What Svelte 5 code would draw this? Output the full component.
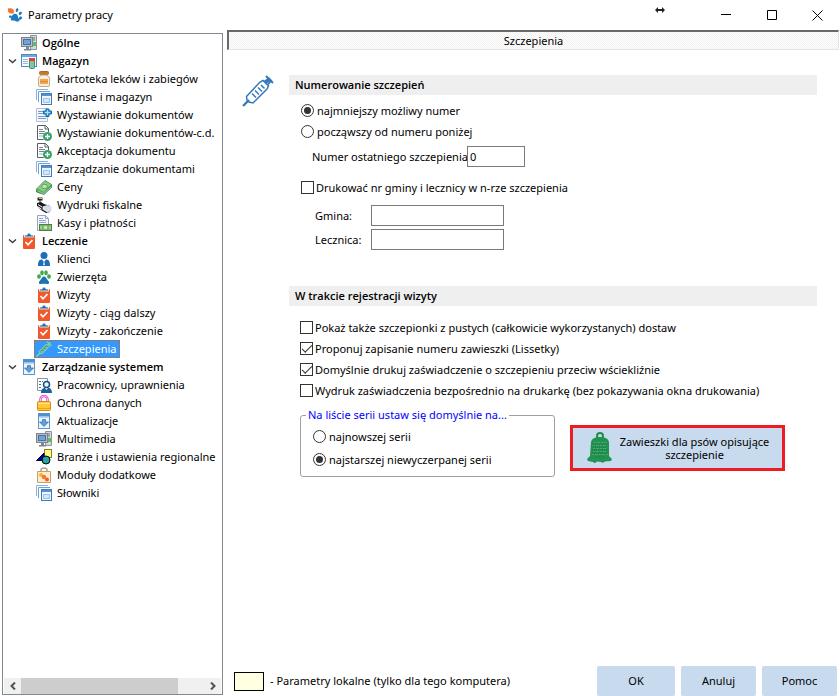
<script>
  const clipboard =
    '<rect x="2" y="2" width="12" height="14" rx="1" fill="#f1582b"/><path d="M3.500 4V2h2.500a2 2 0 0 1 4 0h2.500v2z" fill="#1d73b4" stroke="#fff" stroke-width=".8"/><path d="M4.500 9l2.500 2.800L11.500 7" fill="none" stroke="#fff" stroke-width="1.700"/>';
  const windows =
    '<path d="M.5 11V.5H12" fill="none" stroke="#86b2e0"/><path d="M2.500 13V2.500H14" fill="none" stroke="#6ba1d8"/><rect x="5.500" y="4.500" width="10" height="11" fill="#eef5fc" stroke="#3f7cba"/><path d="M6 6h9" stroke="#5593d0" stroke-width="2"/><path d="M7.500 9.500h6v4h-6z" fill="#d6e7f7" stroke="#9cc2e8"/>';
  const computer =
    '<path d="M9.500.5h6v14h-6z" fill="#d3d9db" stroke="#8b9698"/><path d="M11 3h3M11 5h3" stroke="#66757a"/><rect x="12" y="7" width="3" height="4" fill="#58c25b"/><rect x=".5" y="2.500" width="11" height="9" fill="#b9c1c6" stroke="#7a868c"/><rect x="2.500" y="4.500" width="7" height="5" fill="#6fa3de" stroke="#4a72a0"/><path d="M5 12h3v2h2v1.500H3V14h2z" fill="#7c878c"/>';
  const docPlus =
    '<path d="M1.500.5v14h6M1.500.5h8l3 3V7M9 .5v3.500h3.500" fill="none" stroke="#555e62"/><path d="M3 4.500h4M3 6.500h6M3 8.500h5" stroke="#78828a"/><path d="M3 11h4" stroke="#bcdcf4" stroke-width="2"/><circle cx="11.500" cy="11.500" r="4.500" fill="#38a169"/><path d="M9 11.500h5M11.500 9v5" stroke="#fff" stroke-width="1.300"/>';
  const update =
    '<rect x="2.500" y=".5" width="11" height="15" fill="#edf5fc" stroke="#6295c5"/><path d="M2 2h12" stroke="#4c91d0" stroke-width="3"/><path d="M3 4.500h10" stroke="#b8d4ee"/><path d="M6.500 6.500h3v2.500h3L8 13.500 3.500 9h3z" fill="#5da2dd" stroke="#2f6dab" stroke-width=".7"/>';

  const icons = {
    clipboard,
    windows,
    computer,
    docPlus,
    update,
    store:
      '<rect x=".5" y="1.500" width="15" height="12" fill="#f5faff" stroke="#5089bd"/><path d="M1 3h14" stroke="#6fa8dc" stroke-width="2"/><path d="M2 6.500h5M2 8.500h5M2 10.500h5" stroke="#91bbe1"/><rect x="8.500" y="6.500" width="5" height="9" rx="1" fill="#7cc9a0" stroke="#4b896c"/><rect x="8" y="5" width="6" height="3" fill="#e33e36"/>',
    jar:
      '<rect x="3.500" y=".5" width="9" height="3" rx="1" fill="#c47a2a" stroke="#a8682a"/><path d="M4.500 4h7c0 1.500 2 1.500 2 4v6q0 1.500-1.500 1.500H4Q2.500 15.500 2.500 14V8c0-2.500 2-2.500 2-4z" fill="#f7eee0" stroke="#c7a77c"/><path d="M4 8h8v5H4z" fill="#f0a552"/><path d="M4 10.500h8" stroke="#e08a2e"/>',
    issue:
      '<path d="M.5 1.500h11v13H.5z" fill="#f3f7fe" stroke="#b0c0dd"/><path d="M2 4.500h5M2 6.500h5M2 9.500h8M2 11.500h8" stroke="#7f95cf"/><path d="M10 2h3v2h2.500v3H13v2.500h-3V7H7.500V4H10z" fill="#42a4dd" stroke="#1669a2"/><path d="M11.500 3v5M9 5.500h5" stroke="#a7e0fa"/>',
    cash:
      '<path d="M.5 10L9 1.500l6.500 4v3L8 15.500.5 13z" fill="#4a9f4e" stroke="#327c37" stroke-width=".7"/><path d="M1 9.500L9 2l6 3.500-7 7.500z" fill="#8acb85"/><ellipse cx="8.500" cy="7.500" rx="2.800" ry="2.200" fill="#bde5b7" stroke="#439348" stroke-width=".8"/><path d="M1.500 11.500l6.500 3 7-6.500" fill="none" stroke="#c4eabd" stroke-width=".7"/>',
    printer:
      '<path d="M1.500.5h5v3h-5z" fill="#222"/><path d="M3 1.500h3" stroke="#d2c96b"/><path d="M4 3v3" stroke="#222"/><path d="M1 6l4-1 3 2 6 2v6l-4 1-5-3-4-4z" fill="#171717"/><path d="M6.500 9.500l5-1.500 4 2v4l-4 1.500-5-3z" fill="#d7deed"/><path d="M2 7.500l4 2.500M1.500 9.500l4 2.500" stroke="#fff"/>',
    payments:
      '<path d="M1.500.5h8l3 3v12h-11z" fill="#f4f6fa" stroke="#98a6bf"/><path d="M9.500.5v3h3M3 3.500h4M3 5.500h7M3 7.500h7" fill="none" stroke="#8fa8dc"/><rect x="3.500" y="9.500" width="12" height="6" fill="#7eb26d" stroke="#4c8440"/><circle cx="9.500" cy="12.500" r="1.800" fill="#c7e4b8"/><path d="M5 11v3M14 11v3" stroke="#c7e4b8"/>',
    person:
      '<circle cx="8" cy="4.500" r="3.500" fill="#1c70b3"/><path d="M2 15c0-4.500 1-6.500 4-6.500l2 2.500 2-2.500c3 0 4 2 4 6.500z" fill="#1c70b3"/><path d="M8 9.500l.8 4-.8 1-.8-1z" fill="#fff"/>',
    paw:
      '<ellipse cx="3" cy="7.500" rx="1.900" ry="2.300" fill="#42a949"/><ellipse cx="6" cy="3.700" rx="1.800" ry="2.500" fill="#42a949"/><ellipse cx="10" cy="3.700" rx="1.800" ry="2.500" fill="#42a949"/><ellipse cx="13" cy="7.500" rx="1.900" ry="2.300" fill="#42a949"/><path d="M8 7.500c2 0 2 2 4 4s1 4-1 3.500-4-.5-6 0-3-1.500-1-3.500 2-4 4-4z" fill="#1b72b1"/>',
    syringe:
      '<path d="M0 16l4.500-4.500M12 4l2.500-2.500M11 .5l4.500 4.500" stroke="#7fd0a4" stroke-width="1.500"/><path d="M3 10.500L10.500 3l2.500 2.500L5.500 13z" fill="#4fa67c" stroke="#b5e3c9" stroke-width=".8"/><path d="M5.500 10l1.500 1.500M7.500 8L9 9.500M9.500 6L11 7.500" stroke="#c5ecd6" stroke-width=".8"/>',
    staff:
      '<path d="M8 13.500H1.500v-12h10V4" fill="none" stroke="#8c979e"/><path d="M3 4.500h4M3 7.500h3M3 10.500h2" stroke="#606a70" stroke-dasharray="2 1"/><circle cx="10.500" cy="7.500" r="3" fill="#eaf4fc" stroke="#164d82" stroke-width="1.500"/><path d="M5 16c0-4 2-5 4-5l1.500 2 1.500-2c3 0 4 2 4 5z" fill="#1d609d"/>',
    lock:
      '<path d="M4.500 7V4a3.500 3 0 0 1 7 0v3" fill="none" stroke="#e33ad1" stroke-width="2.400"/><path d="M4.500 7V4a3.500 3 0 0 1 7 0v3" fill="none" stroke="#f8c6f0"/><rect x="1.500" y="6.500" width="13" height="9" rx="1" fill="#ffc938" stroke="#d78918"/><path d="M2 8.500h12" stroke="#ffe58a"/><path d="M2 13.500h12" stroke="#f3a11d"/>',
    shapes:
      '<rect x="8.500" y=".5" width="7" height="8" fill="#fff68a" stroke="#8a831c"/><path d="M.5 11.500L8 4v7.500z" fill="#0000c8" stroke="#000"/><circle cx="10" cy="11" r="4" fill="#20a8a0" stroke="#000"/>',
    modules:
      '<path d="M5 6V3q0-2 3-2t3 2v3" fill="none" stroke="#a5a397" stroke-width="1.500"/><path d="M1.500 4.500h13v11h-13z" fill="#ffeccc" stroke="#c69d62"/><circle cx="5" cy="8" r="2" fill="#f8b029"/><circle cx="8" cy="10" r="2.200" fill="#f57a24"/><circle cx="11" cy="12.500" r="2" fill="#ef5c35"/>'
  };

  const tree = [
    { label: 'Ogólne', icon: 'computer', items: [] },
    {
      label: 'Magazyn',
      icon: 'store',
      items: [
        ['Kartoteka leków i zabiegów', 'jar'],
        ['Finanse i magazyn', 'windows'],
        ['Wystawianie dokumentów', 'issue'],
        ['Wystawianie dokumentów-c.d.', 'docPlus'],
        ['Akceptacja dokumentu', 'docPlus'],
        ['Zarządzanie dokumentami', 'windows'],
        ['Ceny', 'cash'],
        ['Wydruki fiskalne', 'printer'],
        ['Kasy i płatności', 'payments']
      ]
    },
    {
      label: 'Leczenie',
      icon: 'clipboard',
      items: [
        ['Klienci', 'person'],
        ['Zwierzęta', 'paw'],
        ['Wizyty', 'clipboard'],
        ['Wizyty - ciąg dalszy', 'clipboard'],
        ['Wizyty - zakończenie', 'clipboard'],
        ['Szczepienia', 'syringe']
      ]
    },
    {
      label: 'Zarządzanie systemem',
      icon: 'update',
      items: [
        ['Pracownicy, uprawnienia', 'staff'],
        ['Ochrona danych', 'lock'],
        ['Aktualizacje', 'update'],
        ['Multimedia', 'computer'],
        ['Branże i ustawienia regionalne', 'shapes'],
        ['Moduły dodatkowe', 'modules'],
        ['Słowniki', 'windows']
      ]
    }
  ];

  let selected = $state('Szczepienia');
  let numbering = $state('lowest');
  let series = $state('oldest');
  let lastNumber = $state('0');
  let printCodes = $state(false);
  let commune = $state('');
  let clinic = $state('');
  let visit = $state([
    { label: 'Pokaż także szczepionki z pustych (całkowicie wykorzystanych) dostaw', on: false },
    { label: 'Proponuj zapisanie numeru zawieszki (Lissetky)', on: true },
    { label: 'Domyślnie drukuj zaświadczenie o szczepieniu przeciw wściekliźnie', on: true },
    { label: 'Wydruk zaświadczenia bezpośrednio na drukarkę (bez pokazywania okna drukowania)', on: false }
  ]);
</script>

{#snippet icon(name)}
  <svg class="icon" viewBox="0 0 16 16" aria-hidden="true">{@html icons[name]}</svg>
{/snippet}

<div class="window">
  <header class="titlebar">
    <svg class="logo" viewBox="0 0 16 16" aria-hidden="true">
      <path d="M1 1.500c3-1 6 0 6 3s-2 2-3 2-4-1-3-5z" fill="#f07a2a" />
      <path d="M9 2c2-2 3 0 2 2s-3 1-2-2zM12.500 5c3-1 3 1 1.500 2.500s-3.500 0-1.500-2.500zM13 9.500c3 0 2.500 2 1 3s-3-1.500-1-3zM2 9c2-1 3 0 3 1s-3 2-3-1z" fill="#1e7bc0" />
      <path d="M7 7c2-1 4 1 4 3s3 2 1 4-3-.5-5-.5-4 .5-3-2 1-3.500 3-4.500z" fill="#1e7bc0" />
    </svg>
    <h1>Parametry pracy</h1>
    <svg class="resize" viewBox="0 0 10 6" aria-hidden="true">
      <path d="M0 3l3-3v2h4V0l3 3-3 3V4H3v2z" fill="#222" />
    </svg>
    <button class="caption" aria-label="Minimalizuj"><svg viewBox="0 0 11 11"><path d="M0 4.500h10" /></svg></button>
    <button class="caption" aria-label="Maksymalizuj"><svg viewBox="0 0 11 11"><path d="M.5.5h9v9h-9z" /></svg></button>
    <button class="caption" aria-label="Zamknij"><svg viewBox="0 0 11 11"><path d="M.5.5l10 10M10.500.5l-10 10" /></svg></button>
  </header>

  <div class="body">
    <nav class="sidebar" aria-label="Parametry">
      <ul class="tree">
        {#each tree as group}
          <li>
            <button class="node group">
              <span class="twist">
                {#if group.items.length}
                  <svg viewBox="0 0 9 5" aria-hidden="true"><path d="M1 .5l3.500 3 3.500-3" /></svg>
                {/if}
              </span>
              {@render icon(group.icon)}
              <span class="label">{group.label}</span>
            </button>
            {#if group.items.length}
              <ul>
                {#each group.items as [label, glyph]}
                  <li class="leaf">
                    <button class="node" class:selected={selected === label} onclick={() => (selected = label)}>
                      {@render icon(glyph)}
                      <span class="label">{label}</span>
                    </button>
                  </li>
                {/each}
              </ul>
            {/if}
          </li>
        {/each}
      </ul>
      <div class="scroll">
        <button aria-label="Przewiń w lewo"><svg viewBox="0 0 6 8"><path d="M5 .5L1.500 4 5 7.500" /></svg></button>
        <div class="track"><div class="thumb"></div></div>
        <button aria-label="Przewiń w prawo"><svg viewBox="0 0 6 8"><path d="M1 .5L4.500 4 1 7.500" /></svg></button>
      </div>
    </nav>

    <main>
      <h2 class="page-title">Szczepienia</h2>

      <div class="content">
        <svg class="hero" viewBox="0 0 32 32" aria-hidden="true">
          <g fill="none" stroke="#3579ba" stroke-width="1.500">
            <path d="M1 31l6-6" stroke-width="2.300" />
            <path d="M4.500 21.500L18 7l3-1.500 5.500 5.500-1.500 3L11 28l-4-1-2-2z" />
            <path d="M24 8l4-4M24 1l7 7M22.500 6.500L27 3.500l2 2-3 4" stroke-width="2" />
            <path d="M10 18.500l4 4M13 15.500l4 4M16 12.500l4 4M19 10l3.500 3.500" />
          </g>
        </svg>

        <div class="sections">
          <section>
            <h3>Numerowanie szczepień</h3>
            <div class="numbering">
              <label class="option"><input type="radio" name="numbering" value="lowest" bind:group={numbering} />najmniejszy możliwy numer</label>
              <label class="option"><input type="radio" name="numbering" value="from" bind:group={numbering} />począwszy od numeru poniżej</label>
              <div class="last">
                <label for="last-number">Numer ostatniego szczepienia:</label>
                <input id="last-number" type="text" bind:value={lastNumber} />
              </div>
              <label class="option"><input type="checkbox" bind:checked={printCodes} />Drukować nr gminy i lecznicy w n-rze szczepienia</label>
              <div class="codes">
                <label for="commune">Gmina:</label>
                <input id="commune" type="text" bind:value={commune} />
                <label for="clinic">Lecznica:</label>
                <input id="clinic" type="text" bind:value={clinic} />
              </div>
            </div>
          </section>

          <section>
            <h3>W trakcie rejestracji wizyty</h3>
            <div class="visit">
              {#each visit as item}
                <label class="option"><input type="checkbox" bind:checked={item.on} />{item.label}</label>
              {/each}
            </div>
            <div class="bottom">
              <fieldset>
                <legend>Na liście serii ustaw się domyślnie na...</legend>
                <label class="option"><input type="radio" name="series" value="newest" bind:group={series} />najnowszej serii</label>
                <label class="option"><input type="radio" name="series" value="oldest" bind:group={series} />najstarszej niewyczerpanej serii</label>
              </fieldset>
              <button class="tags">
                <svg viewBox="0 0 26 32" aria-hidden="true">
                  <circle cx="13" cy="4" r="3" fill="none" stroke="#208c48" stroke-width="2" />
                  <path d="M4 10q1-5 9-5t9 5v14l3 3-1 2-6 .5q-2 2-4 .5l-4-.5q-2 2.500-4 .5l-5-1-1-2 3-3z" fill="#229350" />
                  <path d="M7 10.500h12M6 13.500h14M6 16.500h14M6 19.500h14M5 22.500h16" stroke="#4fa872" stroke-dasharray="2 1 3 1" />
                  <path d="M6 12h14M6 15h14M5 18h15M5 21h16M8 25h10" stroke="#157a3a" stroke-dasharray="1 1" />
                </svg>
                <span>Zawieszki dla psów opisujące szczepienie</span>
              </button>
            </div>
          </section>
        </div>
      </div>

      <footer>
        <span class="swatch"></span>
        <span class="note">- Parametry lokalne (tylko dla tego komputera)</span>
        <button class="action ok">OK</button>
        <button class="action">Anuluj</button>
        <button class="action">Pomoc</button>
      </footer>
    </main>
  </div>
</div>

<style>
  :global(body) {
    margin: 0;
    background: #fff;
  }

  .window {
    display: flex;
    flex-direction: column;
    min-height: 100vh;
    font: 11px/16px 'Noto Sans', 'Open Sans', sans-serif;
    color: #000;
  }

  .window * {
    box-sizing: border-box;
  }

  button,
  input {
    font: inherit;
    color: inherit;
  }

  button {
    border: 0;
    padding: 0;
    background: none;
  }

  h1,
  h2,
  h3,
  ul {
    margin: 0;
    padding: 0;
    font-size: inherit;
  }

  ul {
    list-style: none;
  }

  .titlebar {
    display: flex;
    align-items: center;
    height: 30px;
    padding-left: 7px;
  }

  .logo {
    width: 16px;
    height: 16px;
    margin-right: 5px;
  }

  h1 {
    flex: 1;
    font-weight: 400;
  }

  .resize {
    width: 10px;
    height: 6px;
    margin: 0 38px 10px 0;
  }

  .caption {
    display: grid;
    place-items: center;
    width: 46px;
    height: 28px;
  }

  .caption:last-child {
    width: 45px;
  }

  .caption svg {
    width: 11px;
    height: 11px;
    fill: none;
    stroke: #000;
  }

  .body {
    display: flex;
    flex: 1;
  }

  .sidebar {
    display: flex;
    flex-direction: column;
    flex: none;
    width: 221px;
    margin: 3px 4px 1px 2px;
    border: 1px solid #828790;
  }

  .tree {
    flex: 1;
  }

  .node {
    display: flex;
    align-items: center;
    height: 18px;
    padding-right: 3px;
    border: 1px solid transparent;
    white-space: nowrap;
  }

  .group {
    padding-left: 4px;
    font-family: 'Open Sans', 'Noto Sans', sans-serif;
    font-weight: 600;
  }

  .leaf {
    padding-left: 31px;
  }

  .twist {
    display: flex;
    width: 12px;
  }

  .twist svg {
    width: 9px;
    height: 5px;
    fill: none;
    stroke: #404040;
    stroke-width: 1.500;
  }

  .icon {
    width: 16px;
    height: 16px;
    margin: 0 5px 0 1px;
  }

  .selected {
    background: #3399ff;
    border: 1px dotted #cc6600;
    color: #fff;
  }

  .scroll {
    display: flex;
    height: 16px;
    margin: 0 1px;
    background: #f0f0f0;
  }

  .scroll button {
    display: grid;
    place-items: center;
    width: 17px;
  }

  .scroll svg {
    width: 6px;
    height: 8px;
    fill: none;
    stroke: #505050;
    stroke-width: 2;
  }

  .track {
    flex: 1;
  }

  .thumb {
    width: 86%;
    height: 100%;
    background: #cdcdcd;
  }

  main {
    display: flex;
    flex-direction: column;
    flex: 1;
    padding-right: 1px;
  }

  .page-title {
    height: 20px;
    border: 1px solid #e3e3e3;
    border-top: 2px solid #696969;
    border-left: 2px solid #696969;
    background: repeating-conic-gradient(#f0f0f0 0 25%, #fff 0 50%) 0 0 / 2px 2px;
    font-weight: 400;
    line-height: 18px;
    text-align: center;
  }

  .content {
    display: flex;
    flex: 1;
    padding: 25px 22px 0 15px;
  }

  .hero {
    flex: none;
    width: 32px;
    height: 32px;
    margin-right: 15px;
  }

  .sections {
    flex: 1;
  }

  section {
    margin-bottom: 36px;
  }

  h3 {
    height: 20px;
    padding-left: 6px;
    background: #efefef;
    font-family: 'Open Sans', 'Noto Sans', sans-serif;
    font-weight: 600;
    line-height: 20px;
  }

  .numbering {
    padding: 5px 0 0 12px;
  }

  .option {
    display: flex;
    align-items: center;
    height: 21px;
  }

  input[type='radio'],
  input[type='checkbox'] {
    appearance: none;
    flex: none;
    display: grid;
    place-items: center;
    width: 13px;
    height: 13px;
    margin: 0 2px 0 0;
    border: 1px solid #333;
    background: #fff;
  }

  input[type='radio'] {
    margin-right: 3px;
    border-radius: 50%;
  }

  input[type='radio']:checked::before {
    content: '';
    width: 7px;
    height: 7px;
    border-radius: 50%;
    background: #333;
  }

  input[type='checkbox']:checked::before {
    content: '';
    width: 9px;
    height: 4px;
    margin-bottom: 3px;
    border: solid #333;
    border-width: 0 0 1px 1px;
    transform: rotate(-45deg);
  }

  input[type='text'] {
    height: 21px;
    padding: 0 2px;
    border: 1px solid #7a7a7a;
    background: #fff;
  }

  .last {
    display: flex;
    align-items: center;
    margin: 4px 0 10px 11px;
  }

  .last label {
    width: 155px;
    white-space: nowrap;
  }

  .last input {
    width: 58px;
  }

  .codes {
    display: grid;
    grid-template-columns: 56px 133px;
    row-gap: 3px;
    align-items: center;
    padding: 7px 0 0 14px;
  }

  .visit {
    padding: 11px 0 0 11px;
  }

  .bottom {
    display: flex;
    align-items: flex-start;
    gap: 15px;
    padding: 6px 0 0 11px;
  }

  fieldset {
    width: 255px;
    height: 70px;
    margin: 0;
    padding: 2px 0 0 12px;
    border: 1px solid #a0a0a0;
    border-radius: 3px;
  }

  fieldset .option {
    height: 23px;
  }

  legend {
    margin-left: -7px;
    padding: 0 2px;
    color: #0000ff;
  }

  .tags {
    display: flex;
    align-items: center;
    width: 215px;
    height: 46px;
    margin-top: 18px;
    padding: 0 6px 0 14px;
    border: 3px solid #ed1c24;
    background: #c8daee;
    line-height: 13px;
  }

  .tags svg {
    flex: none;
    width: 26px;
    height: 32px;
  }

  .tags span {
    flex: 1;
  }

  footer {
    display: flex;
    align-items: center;
    gap: 6px;
    padding: 0 2px 0 7px;
  }

  .swatch {
    width: 30px;
    height: 19px;
    border: 1px solid #000;
    background: #ffffe1;
  }

  .note {
    flex: 1;
  }

  .action {
    width: 75px;
    height: 30px;
    border-radius: 2px;
    background: #c8daee;
  }

  .ok {
    width: 78px;
  }
</style>
